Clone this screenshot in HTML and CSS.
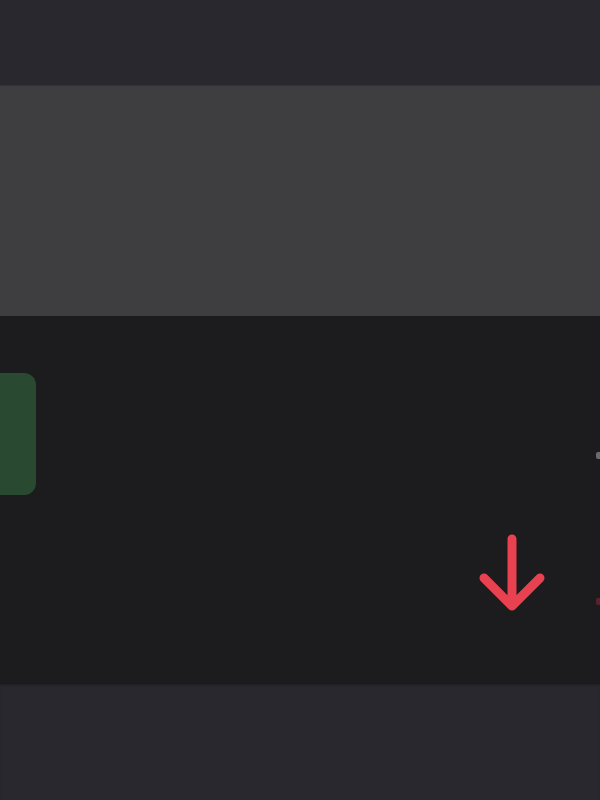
FILE: index.html
```html
<!DOCTYPE html>
<html>
<head>
<meta charset="utf-8">
<link rel="stylesheet" href="styles.css">
</head>
<body>
<div class="screen">
  <div class="topbar"></div>
  <div class="banner"></div>
  <div class="content">
    <div class="green-tile"></div>
    <div class="edge-dot grey"></div>
    <div class="edge-dot red"></div>
    <svg class="arrow" width="80" height="90" viewBox="0 0 80 90">
      <path d="M47 10 V76 M19 49 L47 77 L75 49" fill="none" stroke="#e8414f" stroke-width="9" stroke-linecap="round" stroke-linejoin="round"/>
    </svg>
  </div>
  <div class="bottombar"></div>
</div>
</body>
</html>
```
FILE: styles.css
```css
html, body {
  margin: 0;
  padding: 0;
  background: #29282e;
}
.screen {
  width: 600px;
  height: 800px;
  display: flex;
  flex-direction: column;
  overflow: hidden;
}
.topbar {
  height: 86px;
  background: #29282e;
  border-bottom: 1px solid #333238;
  box-sizing: border-box;
}
.banner {
  height: 230px;
  background: #3e3e40;
}
.content {
  height: 367px;
  background: #1c1c1e;
  position: relative;
}
.green-tile {
  position: absolute;
  left: -20px;
  top: 57px;
  width: 56px;
  height: 122px;
  border-radius: 12px;
  background: #294a30;
}
.arrow {
  position: absolute;
  left: 465px;
  top: 213px;
}
.edge-dot {
  position: absolute;
  left: 596px;
  width: 6px;
  height: 7px;
  border-radius: 2px;
}
.edge-dot.grey {
  top: 136px;
  background: #6a6a70;
}
.edge-dot.red {
  top: 282px;
  background: #5a2230;
}
.bottombar {
  flex: 1;
  background: #29282e;
  box-shadow: inset 0 3px 3px -2px #151518;
}
```
